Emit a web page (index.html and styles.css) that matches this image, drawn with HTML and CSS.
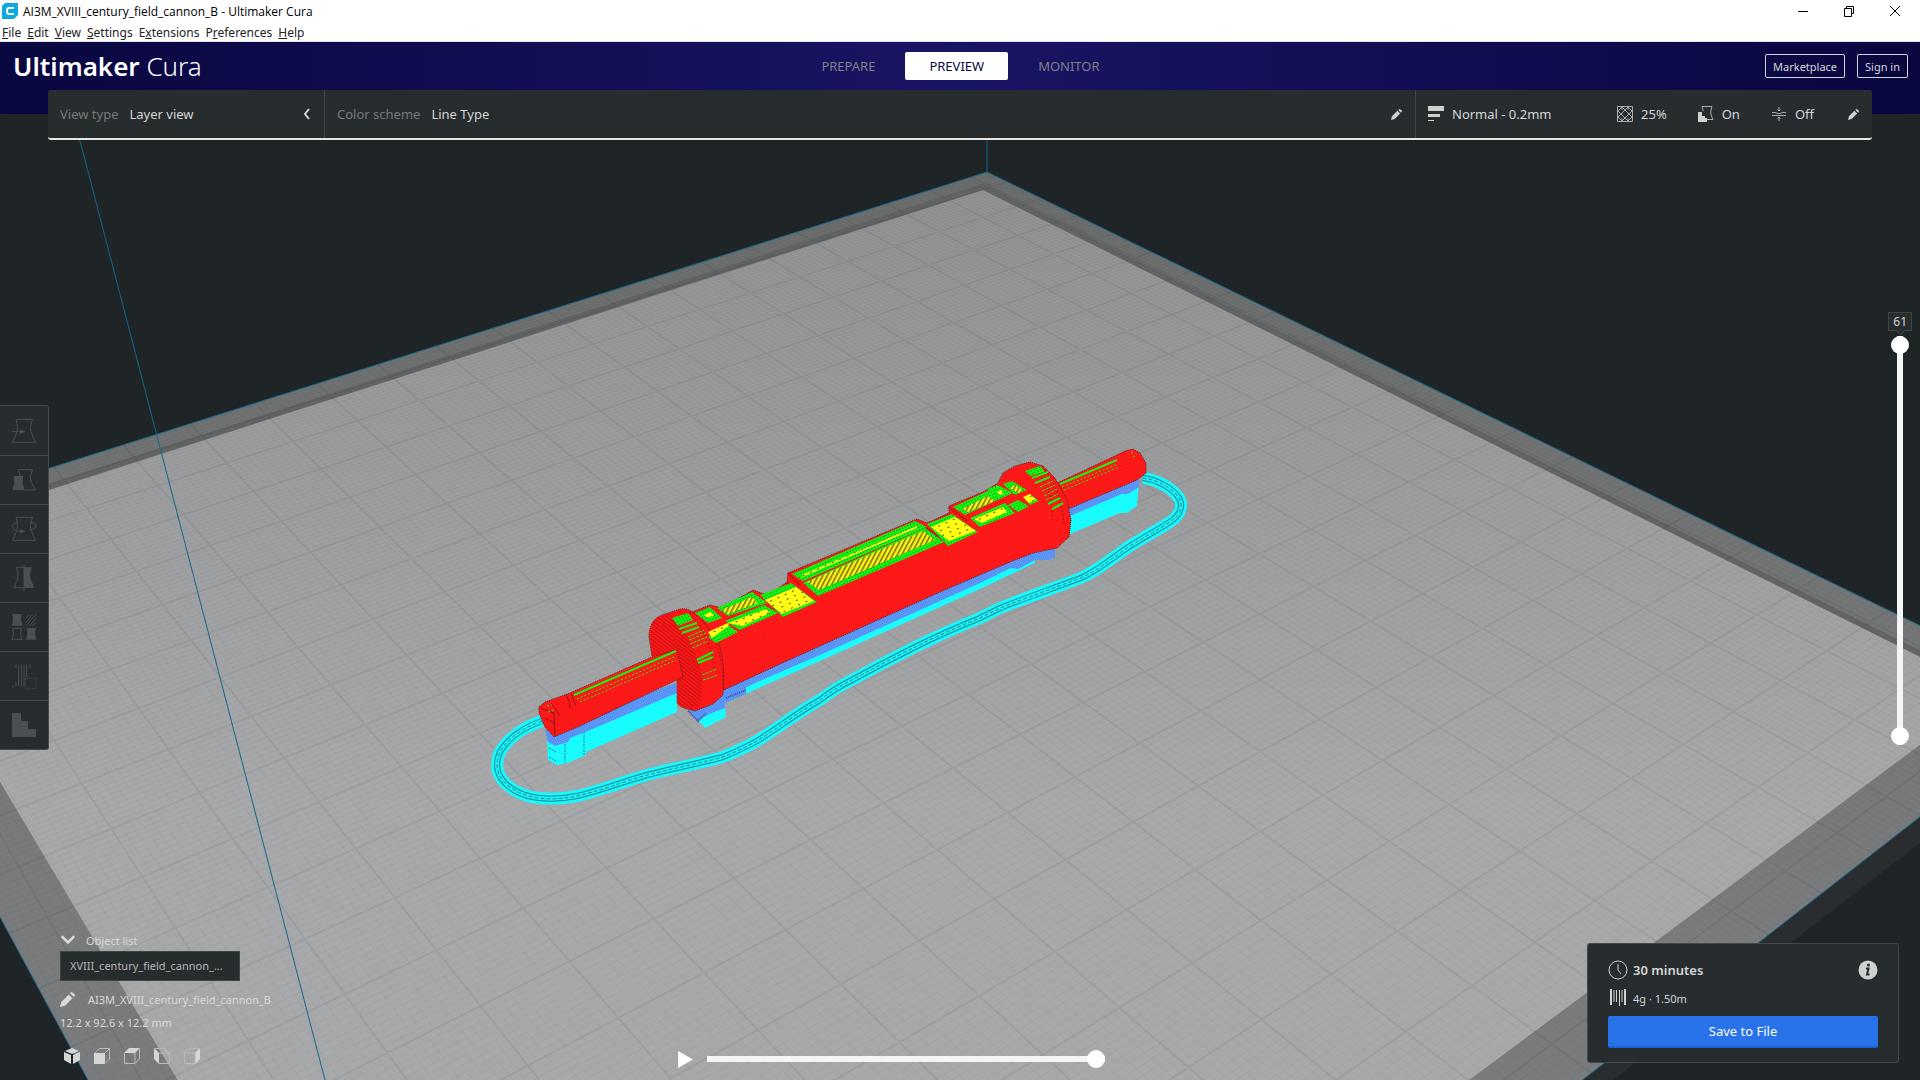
FILE: index.html
```html
<!DOCTYPE html>
<html lang="en">
<head>
  <meta charset="UTF-8">
  <meta name="viewport" content="width=device-width, initial-scale=1.0">
  <title>AI3M_XVIII_century_field_cannon_B - Ultimaker Cura</title>
  <link rel="stylesheet" href="styles.css">
</head>
<body>
  <div class="titlebar">
    <svg class="app-icon" viewBox="0 0 16 16"><path d="M3 0H16V12L12 16H0V3Z" fill="#0fa9e0"/><path d="M12 5H7Q5 5 5 8Q5 11 7 11H12" fill="none" stroke="#fff" stroke-width="2"/></svg>
    <span class="window-title">AI3M_XVIII_century_field_cannon_B - Ultimaker Cura</span>
    <div class="window-buttons">
      <button aria-label="Minimize"><svg viewBox="0 0 12 12"><path d="M1 6.5H11"/></svg></button>
      <button aria-label="Restore"><svg viewBox="0 0 12 12"><path d="M1.5 3.5H8.500V11.500H1.500ZM3.500 3.500V1.500H10.500V8.500H8.500"/></svg></button>
      <button aria-label="Close"><svg viewBox="0 0 12 12"><path d="M1 1L11 11M11 1L1 11"/></svg></button>
    </div>
  </div>

  <nav class="menubar">
    <a href="#"><u>F</u>ile</a>
    <a href="#"><u>E</u>dit</a>
    <a href="#"><u>V</u>iew</a>
    <a href="#"><u>S</u>ettings</a>
    <a href="#">E<u>x</u>tensions</a>
    <a href="#">P<u>r</u>eferences</a>
    <a href="#"><u>H</u>elp</a>
  </nav>

  <header class="header">
    <h1 class="brand"><b>Ultimaker</b> Cura</h1>
    <nav class="stages">
      <button>PREPARE</button>
      <button class="active">PREVIEW</button>
      <button>MONITOR</button>
    </nav>
    <div class="account">
      <button>Marketplace</button>
      <button>Sign in</button>
    </div>
  </header>

  <main class="stage">
    <svg class="viewport" viewBox="0 114 1920 966" preserveAspectRatio="xMidYMin slice">
      <defs>
        <linearGradient id="plate" gradientUnits="userSpaceOnUse" x1="0" y1="180" x2="0" y2="800">
          <stop offset="0" stop-color="#919293"/>
          <stop offset="1" stop-color="#a7a8a9"/>
        </linearGradient>
        <linearGradient id="border" gradientUnits="userSpaceOnUse" x1="0" y1="180" x2="0" y2="900">
          <stop offset="0" stop-color="#6c6d6d"/>
          <stop offset="1" stop-color="#7a7b7c"/>
        </linearGradient>
        <pattern id="hatch" width="4" height="4" patternUnits="userSpaceOnUse" patternTransform="rotate(28)">
          <rect width="4" height="4" fill="#fff314"/><rect width="1.400" height="4" fill="#6b6410"/>
        </pattern>
        <pattern id="sparse" width="8" height="5" patternUnits="userSpaceOnUse" patternTransform="rotate(-24)">
          <rect width="8" height="5" fill="#fffb14"/><rect x="3" y="2" width="2" height="1" fill="#55500c"/>
        </pattern>
        <pattern id="green" width="3" height="3" patternUnits="userSpaceOnUse" patternTransform="rotate(-24)">
          <rect width="3" height="3" fill="#14f514"/><rect width="1" height="1" fill="#0b6e0b"/>
        </pattern>
        <pattern id="ridges" width="3" height="3" patternUnits="userSpaceOnUse" patternTransform="rotate(38)">
          <rect width="3" height="3" fill="#fb1717"/><rect width="3" height="1" fill="#c41313"/>
        </pattern>
        <pattern id="walls" width="2" height="3" patternUnits="userSpaceOnUse" patternTransform="rotate(-24)">
          <rect width="2" height="3" fill="#ff1919"/><rect width="1" height="1" fill="#f21515"/>
        </pattern>
        <pattern id="interface" width="2" height="2" patternUnits="userSpaceOnUse" patternTransform="rotate(-24)">
          <rect width="2" height="2" fill="#5f9bff"/><rect width="1" height="1" fill="#4d7fd8"/>
        </pattern>
        <clipPath id="plate-clip"><polygon points="987,172 2071,699 531,1900 -200,547"/></clipPath>
        <path id="skirt" d="M542 721C524 727 508 738 500 752C496 761 496 770 501 778C507 787 519 794 532 797C548 800 562 799 577 796C600 791 622 782 647 775C675 768 705 762 723 757C740 750 748 746 757 741C778 728 800 711 820 700C830 692 842 685 852 680C872 669 895 657 913 648C935 637 960 626 980 618L1000 608C1028 597 1060 586 1083 577C1100 569 1112 558 1127 548C1142 538 1158 530 1170 522C1182 514 1183 504 1179 498C1172 488 1158 480 1143 478"/>
      </defs>

      <polygon points="2071,699 2095,708 551,1900 531,1900" fill="#292d2f"/>
      <polygon points="987,172 2071,699 531,1900 -200,547" fill="url(#border)"/>
      <path d="M-138 548L983 188L1991 690" fill="none" stroke="#636464" stroke-width="8"/>
      <polygon points="983,190 1991,692 574,1746 -138,550" fill="url(#plate)"/>
      <g clip-path="url(#plate-clip)">
        <path id="grid-minor" class="grid-minor"/>
        <path id="grid-major" class="grid-major"/>
      </g>
      <path class="volume" d="M531 1900L-200 547L987 172L2071 699L531 1900M987 114V172M73 114L325 1080"/>

      <g class="skirt">
        <use href="#skirt" class="ring-outer"/>
        <use href="#skirt" class="ring-dark"/>
        <use href="#skirt" class="ring-cyan"/>
        <use href="#skirt" class="ring-core"/>
      </g>

      <!-- supports -->
      <g fill="#19fcff">
        <polygon points="547,737 548,760 557,765 568,763 586,755 586,752 677,712 677,690"/>
        <polygon points="698,720 705,728 726,717 725,705"/>
        <polygon points="727,697 727,702 820,661 980,589 1035,563 1035,555 820,650"/>
        <polygon points="1068,512 1070,534 1120,513 1127,513 1137,506 1139,482"/>
      </g>
      <path d="M584 732V755M565 744V763M549 748L556 752M549 757L556 761" fill="none" stroke="#11868c" stroke-width="1" stroke-dasharray="2 1"/>
      <g fill="url(#interface)">
        <polygon points="545,730 548,742 555,746 568,742 570,738 583,733 677,693 676,683"/>
        <polygon points="688,711 698,721 707,715 725,708 725,703 746,694 746,687 820,655 980,583 1011,568 1018,569 1035,560 1048,560 1055,558 1055,549 1010,555 724,685"/>
        <polygon points="1068,506 1070,516 1122,494 1128,494 1139,487 1139,476"/>
      </g>
      <path d="M688 711L698 721L706 713M726 698L746 690" fill="none" stroke="#3554a0" stroke-width="2" stroke-dasharray="1 1"/>

      <!-- walls -->
      <g fill="url(#walls)" stroke="#4a2020" stroke-width="1" stroke-dasharray="1 1">
        <polygon points="1055,484 1117,455 1125,451 1133,449 1140,453 1146,463 1146,473 1137,480 1068,509"/>
        <polygon points="692,612 710,605 722,608 753,590 767,595 780,587 787,582 788,573 917,519 927,523 949,513 949,506 983,492 998,483 1003,473 1015,466 1030,462 1043,466 1055,478 1067,500 1071,520 1069,537 1057,548 1033,553 1010,562 940,592 780,664 724,690"/>
        <path d="M649 637Q649 620 662 615L680 609Q688 608 692 612Q710 626 718 642Q726 662 723 695L713 704L695 711Q680 708 677 703L677 650L652 656Z"/>
      </g>
      <path d="M650 637Q650 620 660 616L672 613Q694 640 702 675Q703 700 698 710Q680 708 677 703L677 660L652 656Z" fill="url(#ridges)"/>
      <g fill="url(#walls)">
        <polygon points="539,707 545,702 570,693 652,657 677,650 683,677 580,726 554,737 545,727 539,713" stroke="#4a2020" stroke-dasharray="1 1"/>
        <path d="M998 488Q1003 470 1020 467L1032 464Q1052 480 1054 510L1040 490Z"/>
      </g>
      <path d="M566 695Q571 702 570 708M571 693L576 706M542 709L554 713L555 736M545 718L554 723M551 703L560 716" fill="none" stroke="#8e1414" stroke-width="1"/>
      <path d="M702 620Q724 645 723 690M690 612Q712 640 714 668M1033 468Q1055 490 1052 520M1045 470Q1062 492 1064 525" fill="none" stroke="#8e1414" stroke-width="1" stroke-dasharray="2 2"/>
      <path d="M787 583L817 603M788 573L800 585M924 526L944 541M949 507L968 522M765 596L783 612" fill="none" stroke="#a81414" stroke-width="2" stroke-dasharray="2 1"/>

      <!-- top skin -->
      <g fill="url(#green)">
        <polygon points="672,618 688,613 693,620 678,626"/>
        <polygon points="695,613 710,607 722,618 708,623"/>
        <polygon points="717,608 752,592 767,603 728,616"/>
        <polygon points="725,621 764,605 778,613 740,630"/>
        <polygon points="708,637 728,625 738,632 716,643"/>
        <polygon points="760,595 791,583 817,602 783,617"/>
        <polygon points="792,574 915,521 927,527 803,581"/>
        <polygon points="803,583 925,528 944,542 818,596"/>
        <polygon points="927,524 952,514 978,532 948,546"/>
        <polygon points="953,507 990,490 1002,498 965,515"/>
        <polygon points="987,489 998,485 1013,493 1000,499"/>
        <polygon points="1003,484 1012,481 1027,490 1015,495"/>
        <polygon points="970,518 1005,503 1015,513 980,527"/>
        <polygon points="1008,505 1018,500 1029,506 1018,512"/>
        <polygon points="1024,498 1030,494 1039,501 1030,505"/>
        <polygon points="1025,471 1040,466 1045,472 1030,476"/>
      </g>
      <g fill="url(#hatch)">
        <polygon points="722,610 752,597 758,603 728,614"/>
        <polygon points="807,582 923,531 935,540 819,590"/>
        <polygon points="962,509 988,496 995,501 968,512"/>
        <polygon points="1010,488 1015,485 1023,490 1018,493"/>
      </g>
      <g fill="url(#sparse)">
        <polygon points="704,615 710,612 714,615 708,618"/>
        <polygon points="728,623 766,609 770,613 743,626"/>
        <polygon points="708,632 728,623 730,625 712,638"/>
        <polygon points="765,600 796,587 814,601 782,614"/>
        <polygon points="802,575 917,526 917,528 802,577"/>
        <polygon points="931,527 955,517 976,531 949,541"/>
        <polygon points="997,492 1001,490 1004,493 1000,495"/>
        <polygon points="974,519 1003,507 1007,512 982,523"/>
        <polygon points="1023,497 1030,494 1036,500 1029,503"/>
      </g>
      <g class="skin-lines">
        <path d="M574 695L676 651M1060 484L1117 460" stroke-width="2"/>
        <path d="M577 699L676 656M580 702L676 660M1062 487L1118 464M1064 490L1119 467M547 706L552 705M548 712L554 710M1131 453L1134 452M1133 457L1137 455" stroke-dasharray="2 2"/>
        <path d="M679 629L697 623M682 633L699 627M697 660L713 652M698 663L713 657M1032 478L1048 472M1035 483L1050 477M1048 504L1060 498M1052 509L1063 503" stroke-width="2"/>
        <path d="M688 637L704 630M689 640L706 633M690 644L707 637M692 648L708 641M702 675L717 669M703 680L718 675M1040 487L1053 481M1042 491L1055 485M1044 496L1057 489M1046 500L1058 494" stroke-dasharray="3 1"/>
      </g>
    </svg>

    <section class="settings-bar">
      <button class="panel view-type">
        <span class="muted">View type</span><span>Layer view</span>
        <svg class="chevron" viewBox="0 0 8 12"><path d="M6 1L2 6L6 11"/></svg>
      </button>
      <button class="panel color-scheme">
        <span class="muted">Color scheme</span><span>Line Type</span>
        <svg class="pencil" viewBox="0 0 12 12"><path d="M0 12L1 8L7 2L10 5L4 11ZM8 1L9 0Q10 0 12 2Q12 3 11 4Z"/></svg>
      </button>
      <button class="panel print-setup">
        <svg class="icon" viewBox="0 0 16 16"><path d="M0 0H16V5H0ZM0 8H12V11H0ZM0 14H6V15H0Z" fill="#cfd0d0"/></svg>
        <span class="profile">Normal - 0.2mm</span>
        <svg class="icon" viewBox="0 0 16 16"><path d="M.5.500H15.500V15.500H.5ZM1 5L5 1L15 11L11 15L1 5M11 1L15 5L5 15L1 11L11 1M5 1V4M11 1V4M5 12V15M11 12V15"/></svg>
        <span class="infill">25%</span>
        <svg class="icon" viewBox="0 0 16 16"><path d="M4 .500H14Q12 6 13 9L15 13.500H9M4 .500Q5 3 5 5"/><path d="M0 6H4V10H7V12H9V16H0Z" fill="#cfd0d0"/></svg>
        <span class="support">On</span>
        <svg class="icon" viewBox="0 0 16 16"><path d="M1 6.500H4Q8 9 12 6.500H15M1 9.500H15M8 1V5M8 11V15M6.500 3.500L8 5L9.500 3.500M6.500 12.500L8 11L9.500 12.500"/></svg>
        <span>Off</span>
        <svg class="pencil" viewBox="0 0 12 12"><path d="M0 12L1 8L7 2L10 5L4 11ZM8 1L9 0Q10 0 12 2Q12 3 11 4Z"/></svg>
      </button>
    </section>

    <div class="tools">
      <button aria-label="Move" disabled><svg viewBox="0 0 72 72"><path class="line" d="M12 1H62Q50 28 60 46L70 70H2L12 46Q20 28 12 1Z"/><path class="line" d="M0 38H26"/><path d="M24 31L40 38L24 45Z"/></svg></button>
      <button aria-label="Scale" disabled><svg viewBox="0 0 72 72"><path class="line" d="M18 5H62Q50 28 60 46L70 66H38M18 5Q24 15 24 24"/><path d="M5 24H34Q28 44 38 66H1Q10 44 5 24Z"/></svg></button>
      <button aria-label="Rotate" disabled><svg viewBox="0 0 72 72"><path class="line" d="M12 1H62Q50 28 60 46L70 70H2L12 46Q20 28 12 1ZM18 16Q-4 20 1 31Q6 43 30 43M54 16Q76 20 72 29Q68 38 52 38"/><path d="M24 36L40 43L24 50Z"/></svg></button>
      <button aria-label="Mirror" disabled><svg viewBox="0 0 72 72"><path class="line" d="M35 4H13Q22 24 15 44L6 65H35M36 -4V76"/><path d="M36 4H60Q50 24 58 44L67 66H36Z"/></svg></button>
      <button aria-label="Per model settings" disabled><svg viewBox="0 0 72 72"><path d="M1 -3H29Q24 14 32 32H-1Q6 14 1 -3ZM44 39H72Q66 56 74 74H41Q49 56 44 39Z"/><path class="line" d="M2 40H28Q22 56 30 73H0Q8 56 2 40ZM42 32L72 -2M42 22L62 -2M42 10L52 -2M52 32L72 10M62 32L72 22"/></svg></button>
      <button aria-label="Support blocker" disabled><svg viewBox="0 0 72 72"><path class="line" d="M12 2V12M20 2V68M28 2V68M36 2V68M44 2V40M54 2V14M12 54V68M0 68H6"/><path class="line dotted" d="M40 43H72V73H40Z"/></svg></button>
      <button aria-label="Custom supports" disabled><svg viewBox="0 0 72 72"><path d="M0 0H27V24H48V48H72V72H0Z"/></svg></button>
    </div>

    <div class="layers">
      <output class="layer-number">61</output>
      <div class="layer-slider">
        <input type="range" aria-label="Upper layer" min="0" max="61" value="61">
        <input type="range" aria-label="Lower layer" min="0" max="61" value="0">
      </div>
    </div>

    <section class="objects">
      <button class="objects-toggle"><svg viewBox="0 0 12 8"><path d="M1 1L6 6L11 1"/></svg>Object list</button>
      <ul><li>XVIII_century_field_cannon_...</li></ul>
      <button class="job-name"><svg viewBox="0 0 12 12"><path d="M0 12L1 8L7 2L10 5L4 11ZM8 1L9 0Q10 0 12 2Q12 3 11 4Z"/></svg>AI3M_XVIII_century_field_cannon_B</button>
      <p>12.2 x 92.6 x 12.2 mm</p>
      <div class="views">
        <button aria-label="3D view"><svg viewBox="0 0 16 16"><path class="solid" d="M8 0L15 3L8 6L1 3ZM0 4L7 7V16L0 12ZM16 4L9 7V16L16 12Z"/></svg></button>
        <button aria-label="Front view"><svg viewBox="0 0 16 16"><path class="solid" d="M0 5H11V16H0Z"/><path d="M1 5L5 .500H15.500V11L11 15.500M11 5L15.500.500"/></svg></button>
        <button aria-label="Top view"><svg viewBox="0 0 16 16"><path class="solid" d="M0 5L5 0H16L11 5Z"/><path d="M.5 5V15.500H11V5M15.500.500V11L11 15.500"/></svg></button>
        <button aria-label="Left view"><svg viewBox="0 0 16 16"><path class="solid" d="M0 0L5 5V16L0 11Z"/><path d="M5 5H15.500V15.500H5M.5.500H11L15.500 5M11 .500V5"/></svg></button>
        <button aria-label="Right view"><svg viewBox="0 0 16 16"><path class="solid" d="M11 5L16 0V11L11 16Z"/><path d="M.5 5H11V15.500H.5ZM.5 5L5 .500H15.500"/></svg></button>
      </div>
    </section>

    <div class="playback">
      <button aria-label="Play"><svg viewBox="0 0 15 17"><path d="M0 0L15 8.500L0 17Z" fill="#fff"/></svg></button>
      <input type="range" aria-label="Path position" min="0" max="100" value="100">
    </div>

    <section class="output-card">
      <div class="estimate">
        <svg viewBox="0 0 20 20"><circle cx="10" cy="10" r="9"/><path d="M10 4V10L13 14"/></svg>
        <strong>30 minutes</strong>
        <button aria-label="Print details"><svg viewBox="0 0 20 20"><circle cx="10" cy="10" r="9.500" fill="#cfd0d0"/><path d="M8 8.500H10.500L9 14.500H11.500" class="info-stem"/><circle cx="10.500" cy="5" r="1.500" fill="#272c2f"/></svg></button>
      </div>
      <div class="material">
        <svg viewBox="0 0 20 20"><path d="M3 1V17M17 1V17" stroke-width="2"/><path d="M6 2V14M8.500 2V14M11.500 2V18M14 2V14"/></svg>
        <span>4g · 1.50m</span>
      </div>
      <button class="save">Save to File</button>
    </section>
  </main>

  <script src="viewport.js"></script>
</body>
</html>
```
FILE: styles.css
```css
* {
  margin: 0;
  padding: 0;
  box-sizing: border-box;
}

body {
  font-family: 'Noto Sans', 'Open Sans', sans-serif;
  font-size: 13px;
  color: #d4d5d5;
  background: #1f2427;
  height: 100vh;
  display: flex;
  flex-direction: column;
  overflow: hidden;
}

button {
  font: inherit;
  color: inherit;
  text-align: left;
  background: none;
  border: none;
  display: flex;
  align-items: center;
}

a {
  color: inherit;
  text-decoration: none;
}

svg {
  display: block;
  flex: none;
}

/* window chrome */
.titlebar {
  height: 22px;
  background: #fff;
  color: #000;
  font-family: 'Open Sans', sans-serif;
  font-size: 12px;
  display: flex;
  align-items: center;
  gap: 5px;
  padding: 0 2px;
}

.app-icon {
  width: 16px;
  height: 16px;
}

.window-buttons {
  margin-left: auto;
  display: flex;
}

.window-buttons button {
  width: 46px;
  height: 20px;
  justify-content: center;
}

.window-buttons svg {
  width: 12px;
  height: 12px;
  fill: none;
  stroke: #000;
}

.menubar {
  height: 20px;
  background: #fff;
  border-bottom: 1px solid #e4e4e4;
  color: #222;
  font-size: 12px;
  line-height: 21px;
  display: flex;
  gap: 6px;
  padding-left: 2px;
}

/* header */
.header {
  height: 72px;
  flex: none;
  padding: 0 12px 24px 13px;
  background: linear-gradient(90deg, #08073f, #191565 50%, #08073f);
  display: grid;
  grid-template-columns: 1fr auto 1fr;
  align-items: center;
}

.brand {
  font-size: 26px;
  line-height: 44px;
  font-weight: 300;
  color: #fff;
}

.brand b {
  font-weight: 600;
}

.stages {
  display: flex;
  gap: 6px;
}

.stages button {
  height: 28px;
  padding: 0 24px;
  border-radius: 2px;
  color: #7f7f86;
}

.stages .active {
  background: #fff;
  color: #08073f;
}

.account {
  display: flex;
  justify-content: flex-end;
  gap: 12px;
}

.account button {
  height: 24px;
  padding: 0 7px;
  border: 1px solid #d4d5d5;
  border-radius: 2px;
  font-size: 11px;
}

/* 3D view */
.stage {
  flex: 1;
  position: relative;
  min-height: 0;
}

.viewport {
  position: absolute;
  inset: 0;
  width: 100%;
  height: 100%;
}

.grid-minor,
.grid-major {
  fill: none;
  stroke: #000;
}

.grid-minor {
  stroke-opacity: .03;
}

.grid-major {
  stroke-opacity: .06;
  stroke-width: 2;
}

.volume {
  fill: none;
  stroke: #12688a;
}

.skirt {
  fill: none;
}

.ring-outer {
  stroke: #19f7ff;
  stroke-width: 12;
}

.ring-dark {
  stroke: #1b8388;
  stroke-width: 6;
}

.ring-cyan {
  stroke: #19f7ff;
  stroke-width: 4;
}

.ring-core {
  stroke: #1b8388;
  stroke-dasharray: 4 2;
}

.skin-lines {
  fill: none;
  stroke: #14f514;
}

/* settings bar */
.settings-bar {
  position: relative;
  display: flex;
  height: 50px;
  margin: -24px 48px 0;
  background: #272c2f;
  border-bottom: 2px solid #e6e6e0;
  border-radius: 3px;
}

.panel {
  gap: 11px;
  padding: 0 13px 0 12px;
}

.panel + .panel {
  border-left: 1px solid #3f4447;
}

.view-type {
  width: 276px;
}

.color-scheme {
  flex: 1;
}

.print-setup {
  width: 457px;
  gap: 8px;
}

.muted {
  color: #77797a;
}

.chevron {
  width: 8px;
  height: 12px;
  margin-left: auto;
  fill: none;
  stroke: #d4d5d5;
  stroke-width: 2;
}

.pencil {
  width: 11px;
  height: 11px;
  margin-left: auto;
  fill: #cfd0d0;
}

.icon {
  width: 16px;
  height: 16px;
  fill: none;
  stroke: #a9abac;
}

.icon [fill] {
  stroke: none;
}

.profile {
  flex: 1;
}

.infill,
.support {
  margin-right: 23px;
}

.print-setup .pencil {
  margin-left: 26px;
}

/* left tools */
.tools {
  position: absolute;
  left: 0;
  top: 291px;
  width: 49px;
  border: 1px solid #45494b;
  border-left: none;
  border-radius: 0 3px 3px 0;
  background: #272c2f;
}

.tools button {
  width: 100%;
  height: 49px;
  padding-left: 12px;
}

.tools button + button {
  border-top: 1px solid #45494b;
}

.tools svg {
  width: 24px;
  height: 24px;
  overflow: visible;
  fill: #4b4f51;
}

.tools .line {
  fill: none;
  stroke: #4b4f51;
  stroke-width: 3;
}

.tools .dotted {
  stroke-dasharray: 3 3;
}

/* layer slider */
.layers {
  position: absolute;
  right: 8px;
  top: 198px;
  display: flex;
  flex-direction: column;
  align-items: center;
  gap: 5px;
}

.layer-number {
  position: relative;
  padding: 0 4px;
  border: 1px solid #3f4447;
  background: #272c2f;
  font-size: 12px;
  line-height: 17px;
}

.layer-number::after {
  content: "";
  position: absolute;
  left: 8px;
  bottom: -4px;
  width: 6px;
  height: 6px;
  background: #272c2f;
  border: solid #3f4447;
  border-width: 0 1px 1px 0;
  transform: rotate(45deg);
}

.layer-slider {
  display: grid;
  width: 18px;
  height: 409px;
  background: linear-gradient(#f5f5f5, #f5f5f5) center / 6px 100% no-repeat;
}

.layer-slider input {
  grid-area: 1 / 1;
  width: 18px;
  height: 409px;
  writing-mode: vertical-lr;
  direction: rtl;
  pointer-events: none;
}

input[type="range"] {
  appearance: none;
  background: none;
}

input[type="range"]::-webkit-slider-thumb {
  appearance: none;
  width: 18px;
  height: 18px;
  border-radius: 50%;
  background: #fff;
  pointer-events: auto;
}

/* object list */
.objects {
  position: absolute;
  left: 60px;
  bottom: 16px;
  font-size: 11px;
  color: #d8d9d9;
}

.objects-toggle {
  height: 22px;
  gap: 10px;
}

.objects-toggle svg {
  width: 16px;
  height: 10px;
  fill: none;
  stroke: #d8d9d9;
  stroke-width: 2;
}

.objects ul {
  list-style: none;
  width: 180px;
  border: 1px solid #3f4447;
  background: #272c2f;
  color: #b4b6b7;
}

.objects li {
  padding: 0 9px;
  line-height: 28px;
}

.job-name {
  height: 24px;
  margin-top: 6px;
  gap: 13px;
}

.job-name svg {
  width: 15px;
  height: 15px;
  fill: #d8d9d9;
}

.objects p {
  line-height: 24px;
}

.views {
  display: flex;
  gap: 14px;
  padding-left: 4px;
  margin-top: 13px;
}

.views svg {
  width: 16px;
  height: 16px;
  fill: none;
  stroke: #b8b9ba;
}

.views .solid {
  fill: #d4d5d5;
  stroke: none;
}

/* path playback */
.playback {
  position: absolute;
  left: 678px;
  bottom: 12px;
  display: flex;
  gap: 14px;
}

.playback svg {
  width: 15px;
  height: 17px;
}

.playback input {
  width: 398px;
  height: 18px;
  background: linear-gradient(#f5f5f5, #f5f5f5) center / 100% 6px no-repeat;
}

/* output card */
.output-card {
  position: absolute;
  right: 21px;
  bottom: 17px;
  width: 312px;
  padding: 16px 20px 14px;
  border: 1px solid #43484a;
  border-radius: 3px;
  background: #272c2f;
}

.output-card svg {
  width: 20px;
  height: 20px;
  fill: none;
  stroke: #cfd0d0;
}

.estimate,
.material {
  display: flex;
  align-items: center;
  gap: 5px;
}

.estimate strong {
  font-weight: 600;
}

.estimate button {
  margin-left: auto;
}

.output-card .info-stem {
  stroke: #272c2f;
  stroke-width: 2;
}

.output-card circle[fill] {
  stroke: none;
}

.material {
  margin: 8px 0;
  font-size: 11px;
}

.save {
  width: 100%;
  height: 32px;
  justify-content: center;
  border-bottom: 2px solid #1c62d6;
  border-radius: 2px;
  background: #2872ea;
  color: #fff;
}
```
FILE: viewport.js
```js
// ground plane to screen, i and j are centimetres on the build plate
function project(i, j) {
  const w = 1.0252e-3 - 1.473e-5 * i - 1.855e-5 * j;
  const n = 1.0077 - 0.0587 * i + 0.017 * j;
  return (n / w).toFixed(1) + ' ' + (1 / w - 758).toFixed(1);
}

function gridPath(step, skip) {
  let d = '';
  for (let k = -30; k <= 260; k += step) {
    if (skip && k % 10 === 0) continue;
    const v = k / 10;
    d += 'M' + project(v, -3) + 'L' + project(v, 26);
    d += 'M' + project(-3, v) + 'L' + project(26, v);
  }
  return d;
}

document.getElementById('grid-minor').setAttribute('d', gridPath(1, true));
document.getElementById('grid-major').setAttribute('d', gridPath(10, false));
```
